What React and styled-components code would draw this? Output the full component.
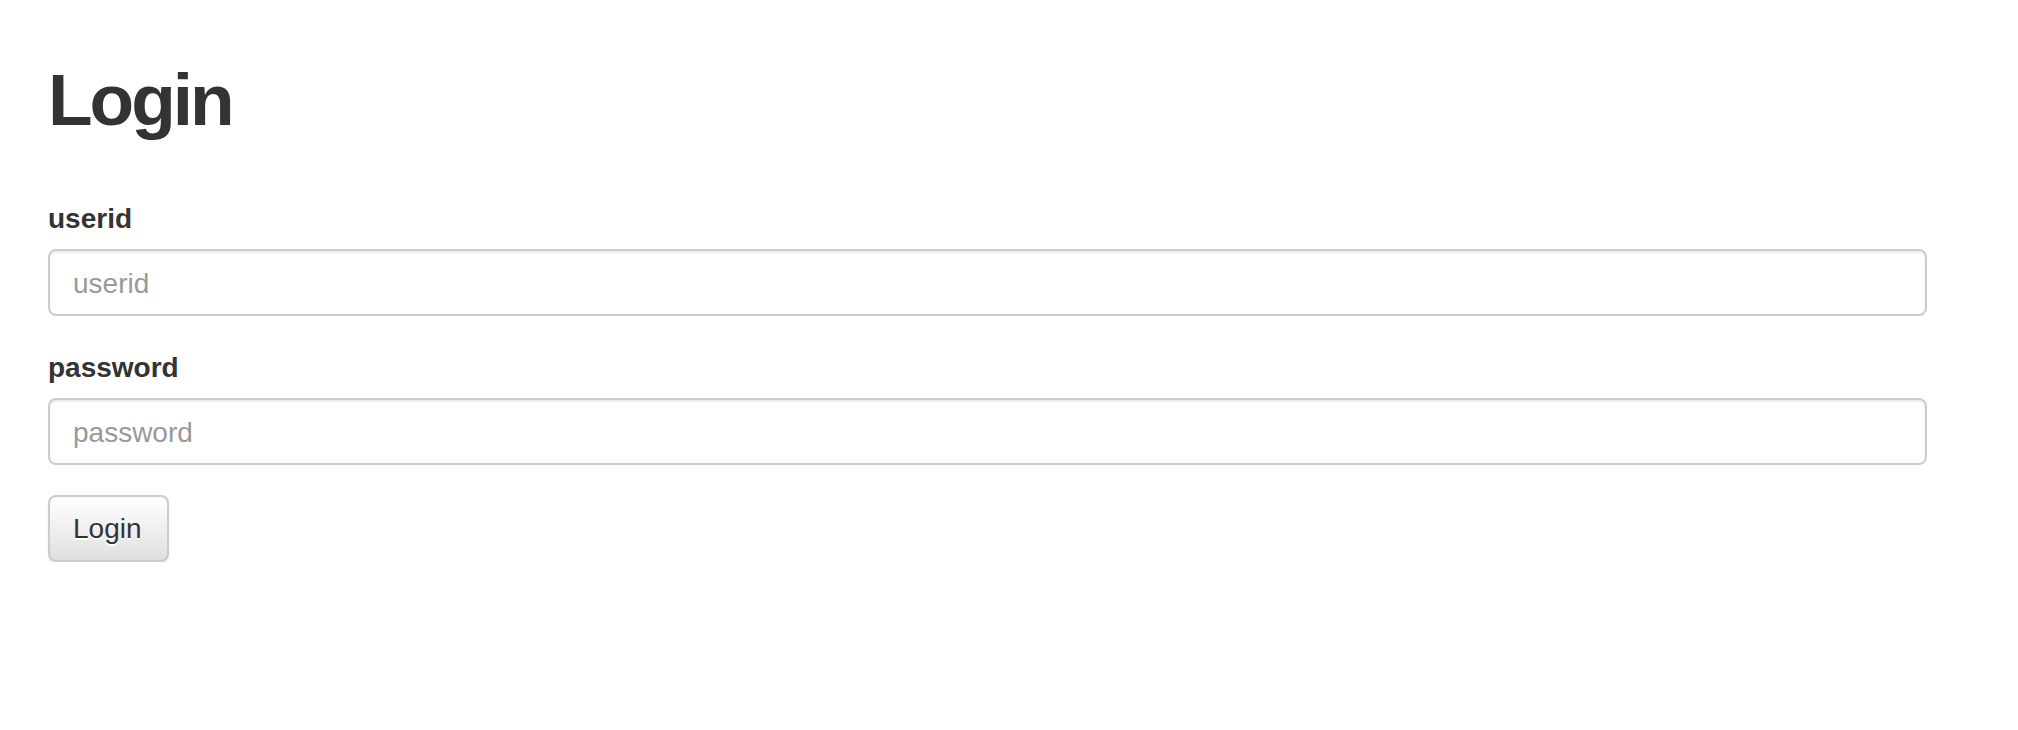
import React from "react";
import styled, { createGlobalStyle } from "styled-components";

const GlobalStyle = createGlobalStyle`
  html, body {
    margin: 0;
    padding: 0;
    background: #fff;
  }
  body {
    font-family: "Liberation Sans", Arial, Helvetica, sans-serif;
    color: #333;
  }
  * { box-sizing: border-box; }
`;

const Page = styled.div`
  padding: 60px 90px 0 48px;
  width: 2018px;
`;

const Title = styled.h1`
  margin: 0 0 58px 0;
  font-size: 73px;
  line-height: 80px;
  font-weight: 700;
  letter-spacing: -3px;
  color: #333;
`;

const Form = styled.form`
  display: flex;
  flex-direction: column;
  width: 1879px;
`;

const FormGroup = styled.div`
  display: flex;
  flex-direction: column;
  margin-bottom: ${(p) => (p.$last ? 30 : 31)}px;
`;

const Label = styled.label`
  font-size: 28px;
  line-height: 40px;
  font-weight: 700;
  color: #333;
  padding-top: 1px;
  margin-bottom: 10px;
`;

const Input = styled.input`
  display: block;
  width: 100%;
  height: 67px;
  padding: 2px 23px 0;
  font-family: "Liberation Sans", Arial, Helvetica, sans-serif;
  font-size: 28px;
  color: #555;
  background: #fff;
  border: 2px solid #ccc;
  border-radius: 8px;
  box-shadow: inset 0 2px 2px rgba(0, 0, 0, 0.075);
  outline: none;
  &::placeholder {
    color: #999;
    opacity: 1;
  }
`;

const Button = styled.button`
  align-self: flex-start;
  width: 121px;
  height: 67px;
  padding: 1px 23px 0;
  font-family: "Liberation Sans", Arial, Helvetica, sans-serif;
  font-size: 28px;
  color: #333;
  text-shadow: 0 2px 0 #fff;
  background-image: linear-gradient(to bottom, #ffffff 0%, #e0e0e0 100%);
  border: 2px solid #ccc;
  border-radius: 8px;
  box-shadow: inset 0 2px 0 rgba(255, 255, 255, 0.15), 0 2px 2px rgba(0, 0, 0, 0.075);
  cursor: pointer;
  text-align: left;
`;

export default function App() {
  return (
    <>
      <GlobalStyle />
      <Page>
        <Title>Login</Title>
        <Form onSubmit={(e) => e.preventDefault()}>
          <FormGroup>
            <Label htmlFor="userid">userid</Label>
            <Input id="userid" type="text" placeholder="userid" />
          </FormGroup>
          <FormGroup $last>
            <Label htmlFor="password">password</Label>
            <Input id="password" type="password" placeholder="password" />
          </FormGroup>
          <Button type="submit">Login</Button>
        </Form>
      </Page>
    </>
  );
}
